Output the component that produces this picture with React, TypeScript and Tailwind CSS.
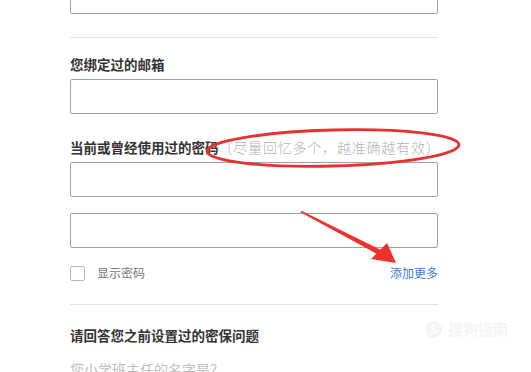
export default function App() {
  return (
    <div
      className="relative h-[372px] w-[531px] overflow-hidden bg-white"
      style={{ fontFamily: '"Noto Sans CJK SC", "Noto Sans", sans-serif' }}
    >
      <div className="flex w-[368px] flex-col ml-[70px]">
        {/* previous field, scrolled off the top */}
        <div className="mt-[-21px] h-[35px] rounded-[2px] border border-[#a0a0a0]" />

        <hr className="mt-[23px] border-t border-[#e2e2e2]" />

        {/* EMAIL */}
        <h3 className="mt-[16px] text-[13.5px] font-bold leading-[20px] text-[#333]">
          您绑定过的邮箱
        </h3>
        <div className="mt-[5px] h-[35px] rounded-[2px] border border-[#a0a0a0]" />

        {/* PASSWORDS */}
        <h3 className="mt-[23px] flex items-center whitespace-nowrap text-[13.5px] leading-[20px]">
          <span className="shrink-0 font-bold text-[#333]">当前或曾经使用过的密码</span>
          <span className="shrink-0 text-[14px] font-light tracking-[0.8px] text-[#b3b3b3]">（尽量回忆多个，越准确越有效）</span>
        </h3>
        <div className="mt-[5px] h-[35px] rounded-[2px] border border-[#a0a0a0]" />
        <div className="mt-[16px] h-[35px] rounded-[2px] border border-[#a0a0a0]" />

        <div className="mt-[16px] flex items-center justify-between">
          <label className="flex items-center gap-[12px]">
            <span className="h-[15px] w-[15px] rounded-[2px] border border-[#b5b5b5]" />
            <span className="text-[12px] leading-[18px] text-[#777]">显示密码</span>
          </label>
          <a className="text-[12px] leading-[18px] text-[#3b7bd6]">添加更多</a>
        </div>

        <hr className="mt-[22px] border-t border-[#e2e2e2]" />

        {/* SECURITY QUESTION */}
        <h3 className="mt-[20px] text-[13.5px] font-bold leading-[20px] text-[#333]">
          请回答您之前设置过的密保问题
        </h3>
        <p className="mt-[14px] text-[14px] leading-[20px] text-[#bdbdbd]">您小学班主任的名字是？</p>
      </div>

      {/* watermark */}
      <div className="absolute left-[425px] top-[318px] flex items-center gap-[6px] text-[#f4f4f4]">
        <span className="flex h-[17px] w-[17px] items-center justify-center rounded-full bg-[#f4f4f4] text-[11px] font-bold text-white">
          S
        </span>
        <span className="text-[15px] font-bold">搜狗指南</span>
      </div>

      {/* annotations */}
      <svg className="absolute left-0 top-0" width="531" height="372" viewBox="0 0 531 372">
        <ellipse
          cx="333"
          cy="148"
          rx="126"
          ry="18"
          transform="rotate(-1.5 333 148)"
          fill="none"
          stroke="#e8312f"
          strokeWidth="2.8"
        />
        <polygon points="300,212 302,211 381,250 379,255" fill="#f0302c" />
        <polygon points="371,259 387,243 396,263" fill="#f0302c" />
      </svg>
    </div>
  );
}
